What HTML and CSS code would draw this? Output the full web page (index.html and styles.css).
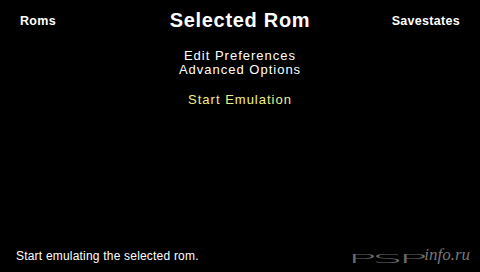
FILE: index.html
```html
<!DOCTYPE html>
<html>
<head>
<meta charset="utf-8">
<link rel="stylesheet" href="styles.css">
</head>
<body>
<div class="screen">
  <header class="top">
    <span class="tab tab-left">Roms</span>
    <h1 class="title">Selected Rom</h1>
    <span class="tab tab-right">Savestates</span>
  </header>
  <nav class="menu">
    <div class="item">Edit Preferences</div>
    <div class="item">Advanced Options</div>
    <div class="item active">Start Emulation</div>
  </nav>
  <footer class="bottom">
    <span class="hint">Start emulating the selected rom.</span>
    <span class="mark"><span class="psp"><span class="psp-t">PSP</span></span><span class="info">info.ru</span></span>
  </footer>
</div>
</body>
</html>
```
FILE: styles.css
```css
html, body {
  margin: 0;
  padding: 0;
  background: #000;
}
.screen {
  width: 480px;
  height: 272px;
  display: flex;
  flex-direction: column;
  color: #fff;
  font-family: "Liberation Sans", Arial, sans-serif;
}
.top {
  display: grid;
  grid-template-columns: 1fr auto 1fr;
  align-items: center;
  padding: 9px 20px 0 20px;
  height: 22px;
}
.tab {
  font-weight: bold;
  font-size: 12.5px;
  letter-spacing: 0.3px;
}
.tab-right {
  justify-self: end;
}
.title {
  margin: 0;
  font-size: 20px;
  font-weight: bold;
  letter-spacing: 0.7px;
}
.menu {
  display: flex;
  flex-direction: column;
  align-items: center;
  padding-top: 18px;
  font-size: 13px;
  letter-spacing: 1px;
  line-height: 14.5px;
}
.item {
  height: 14px;
}
.item.active {
  margin-top: 16px;
  color: #f2f08a;
}
.bottom {
  margin-top: auto;
  display: flex;
  justify-content: space-between;
  align-items: flex-end;
  padding: 0 10px 9px 16px;
}
.hint {
  font-size: 12px;
  letter-spacing: 0.2px;
}
.mark {
  display: flex;
  align-items: flex-end;
  color: #6a6a6a;
}
.psp {
  display: inline-block;
  width: 75px;
  height: 14px;
}
.psp-t {
  display: inline-block;
  font-family: "DejaVu Sans", sans-serif;
  font-weight: 200;
  font-size: 11.5px;
  line-height: 14px;
  letter-spacing: -1.2px;
  transform: translateX(-2px) scaleX(4.3);
  transform-origin: left;
  white-space: nowrap;
}
.info {
  font-family: "Liberation Serif", serif;
  font-style: italic;
  font-size: 17px;
  line-height: 16px;
  color: #777;
}
```
